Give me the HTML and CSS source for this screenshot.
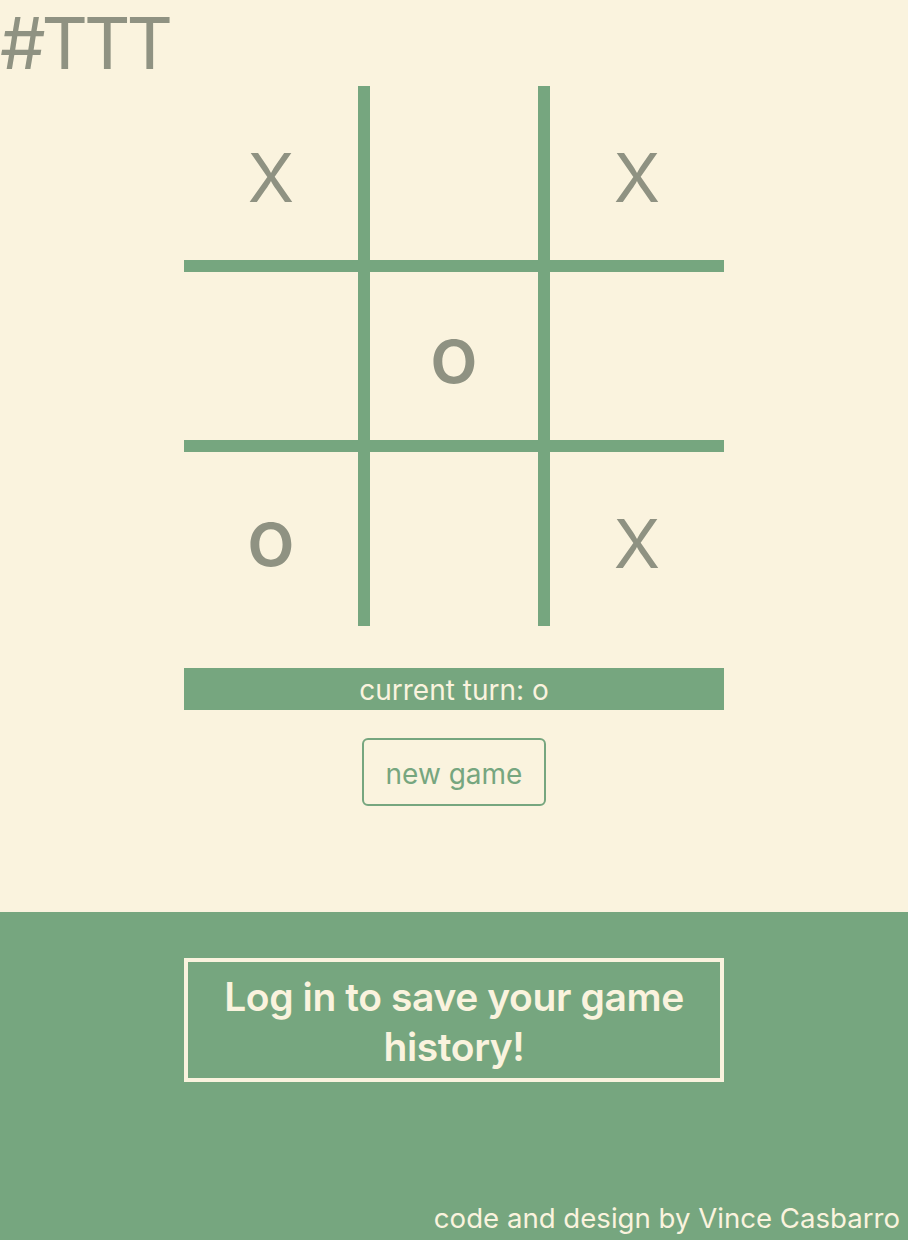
FILE: index.html
```html
<!DOCTYPE html>
<html lang="en">
<head>
<meta charset="utf-8">
<title>#TTT</title>
<link rel="stylesheet" href="styles.css">
</head>
<body>
<main class="game">
  <h1 class="title">#TTT</h1>
  <div class="board">
    <div class="cell c0 mark-x">X</div>
    <div class="cell c1"></div>
    <div class="cell c2 mark-x">X</div>
    <div class="cell c3"></div>
    <div class="cell c4 mark-o">o</div>
    <div class="cell c5"></div>
    <div class="cell c6 mark-o">o</div>
    <div class="cell c7"></div>
    <div class="cell c8 mark-x">X</div>
  </div>
  <div class="turn">current turn: o</div>
  <button class="new-game">new game</button>
</main>
<footer class="footer">
  <div class="login">Log in to save your game history!</div>
  <p class="credit">code and design by Vince Casbarro</p>
</footer>
</body>
</html>
```

FILE: styles.css
```css
html, body {
  margin: 0;
  padding: 0;
}
body {
  background: #faf3de;
  font-family: Inter, "Noto Sans", sans-serif;
  width: 908px;
  min-height: 1240px;
  display: flex;
  flex-direction: column;
}
.game {
  height: 912px;
  display: flex;
  flex-direction: column;
  align-items: center;
}
.title {
  align-self: flex-start;
  margin: 0;
  height: 86px;
  font-size: 72px;
  font-weight: 400;
  line-height: 86px;
  color: #8f9282;
  letter-spacing: -4px;
}
.board {
  display: grid;
  grid-template-columns: repeat(3, 180px);
  grid-template-rows: repeat(3, 180px);
}
.cell {
  box-sizing: border-box;
  display: flex;
  align-items: center;
  justify-content: center;
  color: #8f9282;
  border-color: #76a67f;
  border-style: solid;
  border-width: 0;
}
.mark-x {
  font-size: 68px;
  padding-top: 8px;
}
.mark-o {
  font-size: 80px;
  font-weight: 500;
  padding-bottom: 6px;
}
.c0, .c1, .c3, .c4, .c6, .c7 { border-right-width: 6px; }
.c1, .c2, .c4, .c5, .c7, .c8 { border-left-width: 6px; }
.c0, .c1, .c2, .c3, .c4, .c5 { border-bottom-width: 6px; }
.c3, .c4, .c5, .c6, .c7, .c8 { border-top-width: 6px; }
.turn {
  margin-top: 42px;
  width: 540px;
  height: 42px;
  background: #76a67f;
  color: #faf3de;
  font-size: 28px;
  line-height: 44px;
  text-align: center;
}
.new-game {
  margin-top: 28px;
  width: 184px;
  height: 68px;
  box-sizing: border-box;
  background: transparent;
  border: 2px solid #76a67f;
  border-radius: 6px;
  color: #76a67f;
  font-family: inherit;
  font-size: 28px;
  padding: 4px 0 0;
}
.footer {
  flex: 1;
  background: #76a67f;
  display: flex;
  flex-direction: column;
  align-items: center;
  padding-top: 46px;
}
.login {
  box-sizing: border-box;
  width: 540px;
  height: 124px;
  border: 4px solid #faf3de;
  color: #faf3de;
  font-size: 39px;
  font-weight: 600;
  line-height: 50px;
  letter-spacing: -0.4px;
  text-align: center;
  padding: 10px 16px 0;
}
.credit {
  align-self: flex-end;
  margin: auto 8px 0 0;
  padding-bottom: 4px;
  color: #faf3de;
  font-size: 27.6px;
  line-height: 36px;
}
```
